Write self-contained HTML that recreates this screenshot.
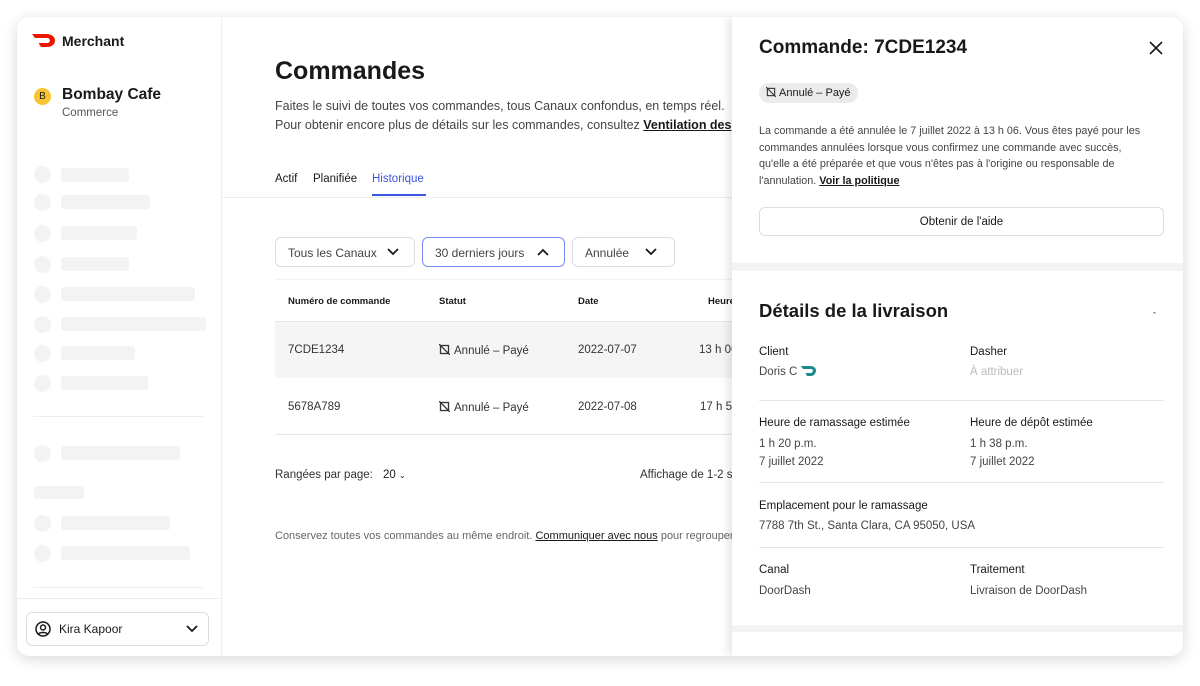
<!DOCTYPE html>
<html><head><meta charset="utf-8"><style>
*{box-sizing:border-box;margin:0;padding:0}
body{width:1200px;height:686px;background:#fff;font-family:"Liberation Sans",sans-serif;color:#191919;position:relative;overflow:hidden}
.win{position:absolute;left:17px;top:17px;width:1166px;height:639px;border-radius:12px;background:#fff;box-shadow:0 3px 14px rgba(0,0,0,.16);overflow:hidden}
.a{position:absolute}
.sk{position:absolute;background:#f3f3f3;border-radius:3px}
.c{position:absolute;width:17px;height:17px;border-radius:50%;background:#f3f3f3}
.t{position:absolute;white-space:nowrap}
.sel{position:absolute;top:220px;height:30px;border:1px solid #ddd;border-radius:6px;font-size:12px;color:#444;padding:8px 12px}
.ic{display:inline-block;vertical-align:-1px;margin-right:4px}
</style></head><body>
<div class="win">
<!-- sidebar -->
<div class="a" style="left:0;top:0;width:205px;height:639px;border-right:1px solid #eee"></div>
<svg class="a" style="left:15px;top:17px" width="24" height="13" viewBox="0 0 24 13"><path d="M0 0h14c6 0 9 3 9 6.5S20 13 15 13H9l-2.5-4H15c1.8 0 2.8-1 2.8-2.5S16.8 4 15 4H3z" fill="#eb1700"/></svg>
<div class="t" style="left:45px;top:16px;font-size:14px;font-weight:bold">Merchant</div>
<div class="a" style="left:17px;top:71px;width:17px;height:17px;border-radius:50%;background:#f7c531;font-size:10px;text-align:center;line-height:17px">B</div>
<div class="t" style="left:45px;top:69px;font-size:15.5px;font-weight:bold">Bombay Cafe</div>
<div class="t" style="left:45px;top:90px;font-size:11.5px;color:#555">Commerce</div>
<div class="c" style="left:17px;top:149px"></div><div class="sk" style="left:44px;top:151px;width:68px;height:14px"></div>
<div class="c" style="left:17px;top:177px"></div><div class="sk" style="left:44px;top:178px;width:89px;height:14px"></div>
<div class="c" style="left:17px;top:208px"></div><div class="sk" style="left:44px;top:209px;width:76px;height:14px"></div>
<div class="c" style="left:17px;top:239px"></div><div class="sk" style="left:44px;top:240px;width:68px;height:14px"></div>
<div class="c" style="left:17px;top:269px"></div><div class="sk" style="left:44px;top:270px;width:134px;height:14px"></div>
<div class="c" style="left:17px;top:299px"></div><div class="sk" style="left:44px;top:300px;width:145px;height:14px"></div>
<div class="c" style="left:17px;top:328px"></div><div class="sk" style="left:44px;top:329px;width:74px;height:14px"></div>
<div class="c" style="left:17px;top:358px"></div><div class="sk" style="left:44px;top:359px;width:87px;height:14px"></div>
<div class="a" style="left:16px;top:399px;width:170px;height:1px;background:#eee"></div>
<div class="c" style="left:17px;top:428px"></div><div class="sk" style="left:44px;top:429px;width:119px;height:14px"></div>
<div class="sk" style="left:17px;top:469px;width:50px;height:13px"></div>
<div class="c" style="left:17px;top:498px"></div><div class="sk" style="left:44px;top:499px;width:109px;height:14px"></div>
<div class="c" style="left:17px;top:528px"></div><div class="sk" style="left:44px;top:529px;width:129px;height:14px"></div>
<div class="a" style="left:16px;top:570px;width:170px;height:1px;background:#eee"></div>
<div class="a" style="left:0;top:581px;width:205px;height:1px;background:#eee"></div>
<div class="a" style="left:9px;top:595px;width:183px;height:34px;border:1px solid #ddd;border-radius:6px"></div>
<svg class="a" style="left:18px;top:604px" width="16" height="16" viewBox="0 0 16 16" fill="none" stroke="#191919" stroke-width="1.5"><circle cx="8" cy="8" r="7"/><circle cx="8" cy="6.5" r="2.5"/><path d="M3.5 13c1.5-2 7.5-2 9 0"/></svg>
<div class="t" style="left:42px;top:605px;font-size:12px">Kira Kapoor</div>
<svg class="a" style="left:168px;top:607px" width="14" height="10" viewBox="0 0 14 10"><path d="M2 2l5 5 5-5" fill="none" stroke="#191919" stroke-width="1.8"/></svg>
<!-- main -->
<div class="t" style="left:258px;top:40px;font-size:25px;font-weight:bold">Commandes</div>
<div class="t" style="left:258px;top:80px;font-size:12.5px;color:#444;line-height:19px">Faites le suivi de toutes vos commandes, tous Canaux confondus, en temps réel.<br>Pour obtenir encore plus de détails sur les commandes, consultez <u style="color:#191919;font-weight:bold">Ventilation des</u></div>
<div class="t" style="left:258px;top:156px;font-size:11.5px">Actif</div>
<div class="t" style="left:296px;top:156px;font-size:11.5px">Planifiée</div>
<div class="t" style="left:355px;top:156px;font-size:11.5px;color:#3a55e0">Historique</div>
<div class="a" style="left:355px;top:177px;width:54px;height:2px;background:#3a55e0"></div>
<div class="a" style="left:205px;top:180px;width:510px;height:1px;background:#eee"></div>
<div class="sel" style="left:258px;width:140px">Tous les Canaux</div>
<svg class="a" style="left:369px;top:230px" width="14" height="10" viewBox="0 0 14 10"><path d="M2 2l5 5 5-5" fill="none" stroke="#191919" stroke-width="1.8"/></svg>
<div class="sel" style="left:405px;width:143px;border-color:#7b8cf0">30 derniers jours</div>
<svg class="a" style="left:519px;top:230px" width="14" height="10" viewBox="0 0 14 10"><path d="M2 8l5-5 5 5" fill="none" stroke="#191919" stroke-width="1.8"/></svg>
<div class="sel" style="left:555px;width:103px">Annulée</div>
<svg class="a" style="left:627px;top:230px" width="14" height="10" viewBox="0 0 14 10"><path d="M2 2l5 5 5-5" fill="none" stroke="#191919" stroke-width="1.8"/></svg>
<div class="a" style="left:258px;top:262px;width:457px;height:1px;background:#f3f3f3"></div>
<div class="t" style="left:271px;top:279px;font-size:9.5px;font-weight:bold">Numéro de commande</div>
<div class="t" style="left:422px;top:279px;font-size:9.5px;font-weight:bold">Statut</div>
<div class="t" style="left:561px;top:279px;font-size:9.5px;font-weight:bold">Date</div>
<div class="t" style="left:691px;top:279px;font-size:9.5px;font-weight:bold">Heure</div>
<div class="a" style="left:258px;top:304px;width:457px;height:57px;background:#f5f5f5;border-top:1px solid #e6e6e6"></div>
<div class="a" style="left:258px;top:417px;width:457px;height:1px;background:#e6e6e6"></div>
<div class="t" style="left:271px;top:327px;font-size:11.5px;color:#333">7CDE1234</div>
<div class="t" style="left:422px;top:327px;font-size:11.5px;color:#333"><svg class="ic" width="11" height="11" viewBox="0 0 11 11" fill="none" stroke="#333" stroke-width="1.3"><rect x="1.5" y="1.5" width="8" height="8"/><path d="M0 0l11 11"/></svg>Annulé – Payé</div>
<div class="t" style="left:561px;top:327px;font-size:11.5px;color:#333">2022-07-07</div>
<div class="t" style="left:682px;top:327px;font-size:11.5px;color:#333">13 h 06</div>
<div class="t" style="left:271px;top:384px;font-size:11.5px;color:#333">5678A789</div>
<div class="t" style="left:422px;top:384px;font-size:11.5px;color:#333"><svg class="ic" width="11" height="11" viewBox="0 0 11 11" fill="none" stroke="#333" stroke-width="1.3"><rect x="1.5" y="1.5" width="8" height="8"/><path d="M0 0l11 11"/></svg>Annulé – Payé</div>
<div class="t" style="left:561px;top:384px;font-size:11.5px;color:#333">2022-07-08</div>
<div class="t" style="left:683px;top:384px;font-size:11.5px;color:#333">17 h 58</div>
<div class="t" style="left:258px;top:452px;font-size:11.5px;color:#333">Rangées par page:</div>
<div class="t" style="left:366px;top:452px;font-size:11.5px">20 <span style="font-size:8px">⌄</span></div>
<div class="t" style="left:623px;top:452px;font-size:11.5px;color:#333">Affichage de 1-2 sur 2</div>
<div class="t" style="left:258px;top:513px;font-size:11px;color:#666">Conservez toutes vos commandes au même endroit. <u style="color:#191919">Communiquer avec nous</u> pour regrouper</div>
<!-- drawer -->
<div class="a" style="left:715px;top:0;width:451px;height:639px;background:#fff;box-shadow:-3px 0 10px rgba(0,0,0,.12)">
<div class="t" style="left:27px;top:20px;font-size:19px;font-weight:bold">Commande: 7CDE1234</div>
<svg class="a" style="left:417px;top:24px" width="14" height="14" viewBox="0 0 14 14"><path d="M1 1l12 12M13 1L1 13" stroke="#191919" stroke-width="1.6"/></svg>
<div class="a" style="left:27px;top:66px;width:99px;height:20px;border-radius:10px;background:#ebebeb;font-size:11px;padding:4px 7px"><svg class="ic" style="margin-right:3px" width="10" height="10" viewBox="0 0 11 11" fill="none" stroke="#333" stroke-width="1.2"><rect x="1.5" y="1.5" width="8" height="8"/><path d="M0 0l11 11"/></svg>Annulé – Payé</div>
<div class="t" style="left:27px;top:106px;font-size:10.8px;color:#444;line-height:16.5px">La commande a été annulée le 7 juillet 2022 à 13 h 06. Vous êtes payé pour les<br>commandes annulées lorsque vous confirmez une commande avec succès,<br>qu'elle a été préparée et que vous n'êtes pas à l'origine ou responsable de<br>l'annulation. <u style="color:#191919;font-weight:bold">Voir la politique</u></div>
<div class="a" style="left:27px;top:190px;width:405px;height:29px;border:1px solid #ddd;border-radius:6px;font-size:11.5px;text-align:center;line-height:28px">Obtenir de l'aide</div>
<div class="a" style="left:0;top:246px;width:451px;height:8px;background:#f3f3f3"></div>
<div class="t" style="left:27px;top:283px;font-size:18.5px;font-weight:bold">Détails de la livraison</div>
<div class="t" style="left:421px;top:294px;font-size:9px">ˆ</div>
<div class="t" style="left:27px;top:329px;font-size:11.5px">Client</div>
<div class="t" style="left:27px;top:349px;font-size:11.5px;color:#444">Doris C <svg style="vertical-align:-1px" width="16" height="10" viewBox="0 0 16 10"><path d="M0 0h9c4 0 6 2 6 4.5S13 10 10 10H6L4.5 7H10c1 0 1.8-.8 1.8-2.2S11 3 10 3H2z" fill="#1a8a8a"/></svg></div>
<div class="t" style="left:238px;top:329px;font-size:11.5px">Dasher</div>
<div class="t" style="left:238px;top:349px;font-size:11.5px;color:#bbb">À attribuer</div>
<div class="a" style="left:27px;top:383px;width:405px;height:1px;background:#e6e6e6"></div>
<div class="t" style="left:27px;top:400px;font-size:11.5px">Heure de ramassage estimée</div>
<div class="t" style="left:27px;top:418px;font-size:11.5px;color:#444;line-height:18px">1 h 20 p.m.<br>7 juillet 2022</div>
<div class="t" style="left:238px;top:400px;font-size:11.5px">Heure de dépôt estimée</div>
<div class="t" style="left:238px;top:418px;font-size:11.5px;color:#444;line-height:18px">1 h 38 p.m.<br>7 juillet 2022</div>
<div class="a" style="left:27px;top:465px;width:405px;height:1px;background:#e6e6e6"></div>
<div class="t" style="left:27px;top:483px;font-size:11.5px">Emplacement pour le ramassage</div>
<div class="t" style="left:27px;top:503px;font-size:11.5px;color:#444">7788 7th St., Santa Clara, CA 95050, USA</div>
<div class="a" style="left:27px;top:530px;width:405px;height:1px;background:#e6e6e6"></div>
<div class="t" style="left:27px;top:547px;font-size:11.5px">Canal</div>
<div class="t" style="left:27px;top:568px;font-size:11.5px;color:#444">DoorDash</div>
<div class="t" style="left:238px;top:547px;font-size:11.5px">Traitement</div>
<div class="t" style="left:238px;top:568px;font-size:11.5px;color:#444">Livraison de DoorDash</div>
<div class="a" style="left:0;top:608px;width:451px;height:7px;background:#f3f3f3"></div>
</div>
</div>
</body></html>
